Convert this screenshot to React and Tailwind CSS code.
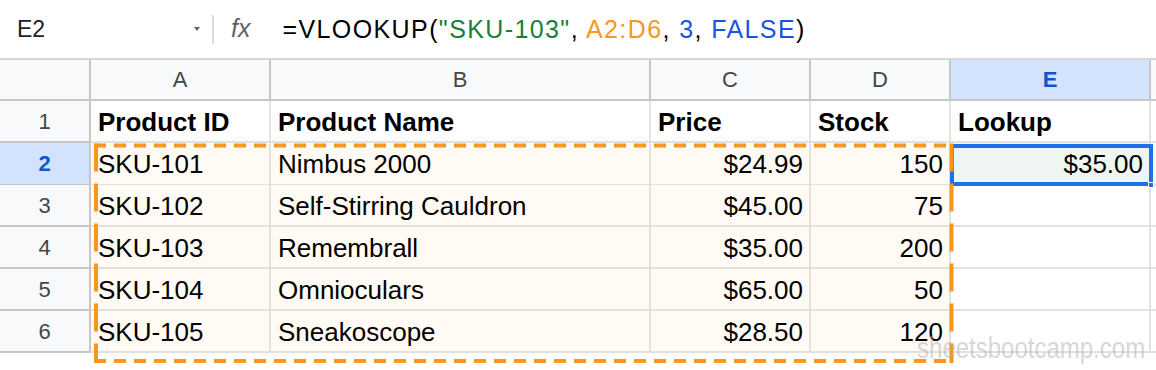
import React from "react";

const rows = [
  ["SKU-101", "Nimbus 2000", "$24.99", "150", "$35.00"],
  ["SKU-102", "Self-Stirring Cauldron", "$45.00", "75", ""],
  ["SKU-103", "Remembrall", "$35.00", "200", ""],
  ["SKU-104", "Omnioculars", "$65.00", "50", ""],
  ["SKU-105", "Sneakoscope", "$28.50", "120", ""],
];

const gridCols =
  "grid grid-cols-[91px_180px_380px_160px_140px_200px_1fr]";

function HeaderCell({ children, active }) {
  return (
    <div
      className={
        active
          ? "flex items-center justify-center border-r-2 border-b-2 border-[#c7c7c7] bg-[#d3e3fd] text-[22px] font-bold text-[#0b57d0]"
          : "flex items-center justify-center border-r-2 border-b-2 border-[#c7c7c7] bg-[#f8f9fa] text-[22px] text-[#444746]"
      }
    >
      {children}
    </div>
  );
}

function RowHead({ n, active }) {
  return (
    <div
      className={
        active
          ? "flex items-center justify-center border-r-2 border-b-2 border-[#c7c7c7] bg-[#d3e3fd] text-[22px] font-bold text-[#0b57d0]"
          : "flex items-center justify-center border-r-2 border-b-2 border-[#c7c7c7] bg-[#f8f9fa] text-[22px] text-[#444746]"
      }
    >
      {n}
    </div>
  );
}

function Cell({ children, right, tint, bold }) {
  let cls =
    "flex items-center pt-[2px] border-r-2 border-b-2 text-[26px] text-black whitespace-nowrap overflow-hidden ";
  cls += tint ? "bg-[#fffaf3] border-[#e4e0db] " : "bg-white border-[#e1e1e1] ";
  cls += right ? "justify-end pr-[6px] " : "justify-start pl-[7px] ";
  cls += bold ? "font-bold" : "";
  return <div className={cls}>{children}</div>;
}

export default function App() {
  return (
    <div className="relative w-[1156px] h-[370px] overflow-hidden bg-white font-['Liberation_Sans',Arial,sans-serif]">
      {/* Formula bar */}
      <div className="flex items-center h-[60px] border-b-2 border-[#d6d6d6]">
        <div className="flex items-center justify-between w-[212px] pl-[17px] pr-[12px]">
          <span className="text-[23px] text-[#202124]">E2</span>
          <svg width="6" height="4" viewBox="0 0 6 4">
            <path d="M0 0 L6 0 L3 4 Z" fill="#5f6368" />
          </svg>
        </div>
        <div className="w-[2px] h-[29px] bg-[#dadce0]" />
        <span className="ml-[17px] text-[25px] italic text-[#5f6368]">fx</span>
        <div className="ml-[32px] pt-[2px] text-[25px] tracking-[1.4px] text-black whitespace-nowrap">
          <span>=VLOOKUP(</span>
          <span className="text-[#188038]">"SKU-103"</span>
          <span>, </span>
          <span className="text-[#f7981d]">A2:D6</span>
          <span>, </span>
          <span className="text-[#1a56d6]">3</span>
          <span>, </span>
          <span className="text-[#1a56d6]">FALSE</span>
          <span>)</span>
        </div>
      </div>

      {/* Column headers */}
      <div className={gridCols + " h-[41px]"}>
        <HeaderCell />
        <HeaderCell>A</HeaderCell>
        <HeaderCell>B</HeaderCell>
        <HeaderCell>C</HeaderCell>
        <HeaderCell>D</HeaderCell>
        <HeaderCell active>E</HeaderCell>
        <div className="border-b-2 border-[#c7c7c7] bg-[#f8f9fa]" />
      </div>

      {/* Row 1 */}
      <div className={gridCols + " h-[42px]"}>
        <RowHead n={1} />
        <Cell bold>Product ID</Cell>
        <Cell bold>Product Name</Cell>
        <Cell bold>Price</Cell>
        <Cell bold>Stock</Cell>
        <Cell bold>Lookup</Cell>
        <div className="border-b-2 border-[#e1e1e1]" />
      </div>

      {rows.map((r, i) => (
        <div key={i} className={gridCols + " h-[42px]"}>
          <RowHead n={i + 2} active={i === 0} />
          <Cell tint>{r[0]}</Cell>
          <Cell tint>{r[1]}</Cell>
          <Cell tint right>
            {r[2]}
          </Cell>
          <Cell tint right>
            {r[3]}
          </Cell>
          {i === 0 ? (
            <div className="flex items-center pt-[2px] justify-end pr-[6px] border-r-2 border-b-2 border-[#e1e1e1] bg-[#eff5f1] text-[26px] text-black">
              {r[4]}
            </div>
          ) : (
            <Cell right>{r[4]}</Cell>
          )}
          <div className="border-b-2 border-[#e1e1e1]" />
        </div>
      ))}

      {/* Selection box E2 */}
      <div className="absolute left-[950px] top-[144px] w-[203px] h-[42px] border-4 border-[#1a73e8] pointer-events-none" />
      <div className="absolute left-[1148px] top-[182px] w-[6px] h-[6px] bg-[#1a73e8] border border-white pointer-events-none" />

      {/* Dashed range border */}
      <svg
        className="absolute left-0 top-0 pointer-events-none"
        width="1156"
        height="370"
      >
        <g stroke="#f7981d" strokeWidth="4" fill="none">
          <line x1="94" y1="145.5" x2="953.5" y2="145.5" strokeDasharray="12 8" />
          <line x1="94" y1="361" x2="953.5" y2="361" strokeDasharray="12 8" />
          <line x1="96" y1="143.5" x2="96" y2="363" strokeDasharray="28 12" />
          <line x1="951.5" y1="143.5" x2="951.5" y2="363" strokeDasharray="28 12" />
        </g>
      </svg>

      {/* Watermark */}
      <div className="absolute right-[11px] top-[330px] origin-right scale-x-[0.8] text-[30px] leading-[36px] text-[#b0b0b0]/50 whitespace-nowrap pointer-events-none">
        sheetsbootcamp.com
      </div>
    </div>
  );
}
